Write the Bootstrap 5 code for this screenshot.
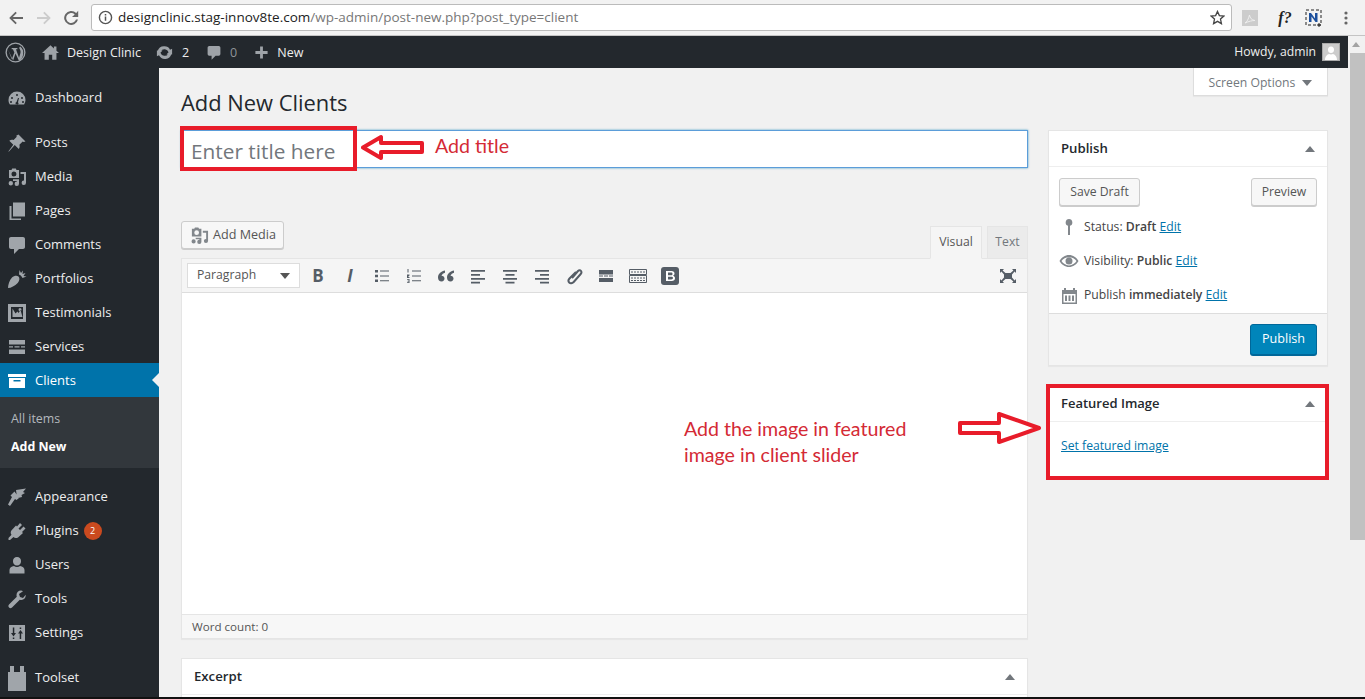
<!DOCTYPE html>
<html lang="en"><head><meta charset="utf-8"><title>Add New Clients</title>
<link href="https://cdn.jsdelivr.net/npm/bootstrap@5.3.0/dist/css/bootstrap.min.css" rel="stylesheet">
<script src="https://cdn.jsdelivr.net/npm/bootstrap@5.3.0/dist/js/bootstrap.bundle.min.js"></script>
<style>
html,body{height:699px;overflow:hidden}
body{font-family:"Open Sans",sans-serif;font-size:12.2px;color:#444;background:#f1f1f1;border-bottom:2px solid #111}
svg{display:block;flex:none}
.sprite{position:absolute;width:0;height:0}
.browser-bar{height:36px;background:#f2f2f2;border-bottom:1px solid #c4c4c4;padding:0 0 0 8px}
.nav-fwd{margin-left:12px}
.nav-reload{margin-left:11px}
.url-box{width:1141px;height:27px;margin-left:12px;background:#fff;border:1px solid #bbb;border-radius:3px;padding:0 6px;font-size:13.5px;color:#777}
.url-box b{font-weight:400;color:#222}
.url-text{margin-left:5px}
.browser-tools{margin-left:10px}
.fq{font:italic 700 16px "Liberation Serif",serif;color:#222;width:24px;text-align:center;margin-left:15px}
.ext-n{margin-left:8px}
.ext-dots{margin-left:21px}
.page-zone{height:661px}
.page-col{min-width:0}
.scroll-gutter{width:17px;background:#f1f1f1;padding-top:17px;position:relative}
.scroll-up{position:absolute;left:4px;top:6px;border:4.500px solid transparent;border-bottom:5px solid #a3a3a3;border-top:0}
.scroll-thumb{height:487px;width:15px;margin-left:2px;background:#c1c1c1}
.admin-bar{height:32px;background:#23282d;color:#eee;padding:1px 8px 0 5px;flex-wrap:nowrap;justify-content:flex-start;font-size:12.5px}
.bar-logo{margin-right:16px;margin-top:-1px}
.bar-item{gap:8px;margin-right:14px;line-height:32px}
.bar-item.bar-upd{gap:8px;margin-right:17px}
.bar-item.bar-com{margin-right:17px}
.bar-item.bar-new{gap:8px}
.bar-dim{color:#8f9498}
.howdy{font-size:12.2px}
.avatar-box{width:18px;height:18px;background:#ccc;margin-left:6px;border:1px solid #aaa}
.main-row{min-height:0}
.side-menu{width:159px;background:#23282d;padding:12px 0;flex-wrap:nowrap;overflow:hidden;flex:none}
.menu-row{height:34px;flex:none;color:#eee;font-size:13px;padding:1px 0 0 7px;gap:8px;position:relative;text-decoration:none}
.menu-row:hover{color:#eee}
.menu-row svg{width:20px;height:20px;fill:#a0a5aa}
.menu-row svg.tall-icon{width:18px;height:26px;margin:0 1px}
.menu-gap{margin-top:11px}
.menu-on{background:#0073aa;color:#fff}
.menu-row.menu-on svg{fill:#fff}
.menu-on::after{content:"";position:absolute;right:0;top:10px;border:7px solid transparent;border-right:7px solid #f1f1f1;border-left:0}
.sub-menu{background:#32373c;height:71px;flex:none;padding:8px 0 0 11px;font-size:12.4px;color:#b4b9be}
.sub-row{height:28px;line-height:28px}
.sub-on{color:#fff;font-weight:700}
.count-pill{background:#ca4a1f;color:#fff;font-size:9px;font-weight:400;width:18px;height:18px;line-height:18px;padding:0;border-radius:50%;margin-left:-3px}
.work-area{padding:0 20px 0 22px;position:relative;min-width:0}
.screen-tab{position:absolute;right:20px;top:0;width:135px;height:28px;background:#fff;border:1px solid #ddd;border-top:0;box-shadow:0 1px 1px rgba(0,0,0,.04);color:#72777c;gap:7px;justify-content:center;padding-top:3px}
.tri-down{border:5px solid transparent;border-top:6px solid #72777c;border-bottom:0}
.tri-up{border:5px solid transparent;border-bottom:6px solid #72777c;border-top:0}
.fmt-select .tri-down{border-top-color:#555}
.page-title{font-size:21.9px;font-weight:400;color:#23282d;margin:0;padding-top:21px;height:62px;line-height:27px}
.edit-col{width:847px;flex:none}
.side-col{width:280px;flex:none;margin-left:20px}
.title-field.form-control{height:38px;border:1px solid #5b9dd9;border-radius:0;box-shadow:0 0 2px rgba(30,140,190,.8);font-size:20.8px;padding:4px 9px 0;color:#72777c;background:#fff}
.title-field.form-control::placeholder{color:#72777c}
.media-row{height:90px;align-items:flex-end}
.wp-btn.btn{height:28px;padding:1px 10px 0;font-size:12.2px;color:#555;background:#f7f7f7;border:1px solid #ccc;border-radius:3px;box-shadow:0 1px 0 #ccc;gap:4px;--bs-btn-hover-bg:#f7f7f7;display:inline-flex;align-items:center}
.wp-btn.media-btn{width:103px;margin-bottom:9px;padding:1px 0 0 8px;font-size:12.6px}
.tab-pair{gap:5px;align-self:flex-end;margin-bottom:-1px;position:relative;z-index:1}
.ed-tab{height:33px;line-height:29px;width:41px;text-align:center;border:1px solid #e5e5e5;background:#ebebeb;color:#72777c}
.ed-tab-on{background:#f5f5f5;color:#555;border-bottom-color:#f5f5f5;width:52px}
.ed-shell{background:#fff;border:1px solid #e5e5e5;box-shadow:0 1px 1px rgba(0,0,0,.04)}
.ed-tools{height:34px;background:#f5f5f5;border-bottom:1px solid #ddd;padding:0 10px 0 5px}
.fmt-select{width:113px;height:25px;background:#fff;border:1px solid #ddd;padding:0 9px;color:#555;margin-right:2px}
.tool-cell{width:32px;color:#555d66;justify-content:center;font-size:17px;line-height:1;font-weight:700}
.tool-cell svg{fill:#555d66}
.tool-i{font-style:italic}
.tool-full{margin-right:-7px}
.ed-body{height:321px}
.ed-foot{height:24px;background:#f7f7f7;border-top:1px solid #e5e5e5;padding:0 10px;font-size:11.6px;color:#555}
.wp-box.card{border:1px solid #e5e5e5;border-radius:0;box-shadow:0 1px 1px rgba(0,0,0,.04);background:#fff;--bs-card-inner-border-radius:0}
.wp-box .card-header{background:#fff;border-bottom:1px solid #eee;border-radius:0;padding:1px 12px 0;height:36px;font-weight:600;font-size:13.2px;color:#23282d}
.wp-box.excerpt-box{margin-top:19px;height:60px}
.pub-btns{padding:11px 10px 4px}
.pub-btns .wp-btn.btn{padding:1px 0 0;justify-content:center;width:81px}
.pub-btns .wp-btn.btn.btn-prev{width:66px}
.pub-row{height:34px;gap:5px;padding:0 10px}
.pub-row svg{fill:#82878c}
.pub-row i{width:20px;display:flex;justify-content:center}
.pub-row b{font-weight:600}
.wp-link{color:#0073aa}
.pub-foot{height:52px;background:#f5f5f5;border-top:1px solid #ddd;padding:0 10px;margin-top:1px}
.blue-btn.btn{height:31px;width:67px;padding:0;background:#0085ba;border:1px solid #006799;border-radius:3px;box-shadow:0 1px 0 #006799;color:#fff;font-size:12.6px}
.wp-box.feat-box{margin-top:19px;height:92px}
.feat-link{padding:15px 12px}
.feat-box .card-header{font-size:13px}
.anno-frame{position:absolute;border:4px solid #e81c2a;pointer-events:none}
.frame-title{left:180px;top:126px;width:177px;height:45px}
.frame-feat{left:1046px;top:384px;width:283px;height:96px}
.anno-text{position:absolute;color:#d42a35;font-family:Lato,sans-serif;font-size:19.6px;line-height:26px;white-space:nowrap}
.text-title{left:435px;top:133px}
.text-feat{left:684px;top:416px}
.anno-art{position:absolute}
.art-left{left:361px;top:134px}
.art-right{left:957px;top:411px}
</style></head><body>
<svg class="sprite"><defs>
<symbol id="i-gauge" viewBox="0 0 20 20"><path d="M10 3.500a8.500 8.500 0 0 0-8.500 8.500c0 1.700.5 3.300 1.400 4.500h14.200a8.300 8.300 0 0 0 1.400-4.500A8.500 8.500 0 0 0 10 3.500zM10 6a1 1 0 1 1 0 2 1 1 0 0 1 0-2zM5 9a1 1 0 1 1 0 2 1 1 0 0 1 0-2zm10 0a1 1 0 1 1 0 2 1 1 0 0 1 0-2zm-3 1-1 4.200a1.500 1.500 0 1 1-1.500-.3L11 10zM4 13a1 1 0 1 1 0 2 1 1 0 0 1 0-2zm12 0a1 1 0 1 1 0 2 1 1 0 0 1 0-2z" fill-rule="evenodd"/></symbol>
<symbol id="i-pin" viewBox="0 0 20 20"><path d="M11.500 1.500l7 7-1.800.6-1-.6-3.300 3.200c.5 1.600.3 3-.6 4.300L7.700 11.900 2 18.500l-.7-.1 5-6.700-4-4c1.300-.9 2.700-1.100 4.300-.6l3.200-3.300-.6-1z"/></symbol>
<symbol id="i-media" viewBox="0 0 20 20"><path fill-rule="evenodd" d="M2 3h2.500l.7-1.500h3.600L9.500 3H12v8H2zM7 4.500a2.500 2.500 0 1 0 0 5 2.500 2.500 0 0 0 0-5z"/><path d="M13.500 5H19v10.800a2.200 2.200 0 1 1-2-2.200V7h-3.500zM6 12.300h6v4.500a2.200 2.200 0 1 1-2-2.200V14H6zM3.800 14a2.200 2.200 0 1 1 0 4.400 2.200 2.200 0 0 1 0-4.400z"/></symbol>
<symbol id="i-pages" viewBox="0 0 20 20"><path d="M6 1.500h12v14H6zM2.500 5H4.500v12.500H14v1.500H2.500z"/></symbol>
<symbol id="i-comment" viewBox="0 0 20 20"><path d="M4 2h12c1.100 0 2 .9 2 2v8c0 1.100-.9 2-2 2h-4l-5 5v-5H4c-1.100 0-2-.9-2-2V4c0-1.100.9-2 2-2z"/></symbol>
<symbol id="i-carrot" viewBox="0 0 20 20"><path d="M1 19c0-3 1.500-8 4-10.500 2-2 5-2.500 6.500-1s1.100 4.400-.8 6.400C8 16.500 4 19 1 19zM12 5.500l.5-4.500 1.500 3 2-2.500-.5 3.500 3-1-2 3 3 .5-4 1.500c-.5-1.500-2-3-3.500-3.500z"/></symbol>
<symbol id="i-image" viewBox="0 0 20 20"><path d="M1 1h18v18H1zm3 3v12h12V4zm1.500 10V5.500l3 5 2-2 1 1.500 2-3 2 7zM13 5a1.500 1.500 0 1 1 0 3 1.500 1.500 0 0 1 0-3z" fill-rule="evenodd"/></symbol>
<symbol id="i-services" viewBox="0 0 20 20"><path d="M2 3h16v4.500H2zM2 9.200h4v1.200H2zm5.500 0h5v1.200h-5zm6.500 0h4v1.200h-4zM2 12.500h16V17H2z"/></symbol>
<symbol id="i-archive" viewBox="0 0 20 20"><path d="M1 3h18v3H1zm1 4h16v10H2zm4.500 2v1.500h7V9z" fill-rule="evenodd"/></symbol>
<symbol id="i-brush" viewBox="0 0 20 20"><path d="M9 3l10-1.500-3 3.500 2 1-3.500 2 .5 2-4 1-1-.5zM7.500 4.500L12 11l-2.500 2-1.500-1-5 7-2-1.500L5 10 3.500 8.500z"/></symbol>
<symbol id="i-plug" viewBox="0 0 20 20"><path d="M13 2l2 2-3.500 3.500 1.500 1.500L16.500 5.500l2 2-3.500 3.500 1 1-5 4.500c-2 .9-3.500.5-4.500-.5L3 19H1.500v-2l3-3.200c-1-1.300-1-2.900-.1-4.300l4.600-5 1 1z"/></symbol>
<symbol id="i-user" viewBox="0 0 20 20"><path d="M10 2a4 4 0 0 1 4 4.500c0 2-1.500 4-4 4s-4-2-4-4A4 4 0 0 1 10 2zM2.500 15c0-2.500 2-3.500 4.500-4 .8.600 1.800 1 3 1s2.200-.4 3-1c2.500.5 4.500 1.500 4.500 4v3.500h-15z"/></symbol>
<symbol id="i-wrench" viewBox="0 0 20 20"><path d="M14 1.500c-2.500 0-4.500 2-4.500 4.500 0 .6.100 1.200.3 1.700L2 15.500a2.100 2.100 0 0 0 3 3l7.800-7.800c.4.200 1 .3 1.600.3 2.500 0 4.600-2.200 4.300-5.200L16 9l-3-1-1-3 4-2.800c-.6-.4-1.300-.7-2-.7z"/></symbol>
<symbol id="i-sliders" viewBox="0 0 20 20"><path d="M2 2h16v16H2zm3.800 2.500V10H4l2.500 3.500L9 10H7.300V4.500zm0 10V16h1.500v-1.500zm6.900-10v1.500h1.500V4.500zM13.500 7 11 10.500h1.700V16h1.500v-5.500H16z" fill-rule="evenodd"/></symbol>
<symbol id="i-toolset" viewBox="0 0 18 26"><path d="M0 7h2V1h4v6h6V1h4v6h2v19H0z"/></symbol>
</defs></svg>

<div class="browser-bar d-flex align-items-center">
  <svg width="16" height="16" viewBox="0 0 16 16"><path d="M15 7H4.800l4-4L7.500 1.700 1.200 8l6.300 6.300 1.300-1.300-4-4H15z" fill="#666"/></svg>
  <svg class="nav-fwd" width="16" height="16" viewBox="0 0 16 16"><path d="M1 7h10.200l-4-4 1.300-1.300L14.800 8l-6.300 6.300L7.200 13l4-4H1z" fill="#ccc"/></svg>
  <svg class="nav-reload" width="16" height="16" viewBox="0 0 16 16"><path d="M13.200 3A7 7 0 1 0 15 9.500h-2A5 5 0 1 1 11.700 4.400L9 7h6.200V.8z" fill="#666"/></svg>
  <div class="url-box d-flex align-items-center">
    <svg width="15" height="15" viewBox="0 0 16 16"><circle cx="8" cy="8" r="6.500" fill="none" stroke="#555" stroke-width="1.500"/><path d="M7.200 7h1.600v4.500H7.200zM7.200 4.200h1.600v1.600H7.200z" fill="#555"/></svg>
    <span class="url-text flex-grow-1"><b>designclinic.stag-innov8te.com</b>/wp-admin/post-new.php?post_type=client</span>
    <svg width="15" height="15" viewBox="0 0 16 16"><path d="M8 1.500l2 4.500 4.800.5-3.600 3.200 1 4.800L8 12.100l-4.200 2.400 1-4.800L1.200 6.500 6 6z" fill="none" stroke="#444" stroke-width="1.400"/></svg>
  </div>
  <div class="browser-tools d-flex align-items-center">
    <svg width="16" height="16" viewBox="0 0 16 16"><rect width="16" height="16" fill="#ccc"/><path d="M3 13c2-1 3.500-4 4.500-8 .5 3 2 5 5.500 5.500-3 0-6 .8-10 2.500z" fill="none" stroke="#eee"/></svg>
    <span class="fq">f?</span>
    <svg class="ext-n" width="18" height="18" viewBox="0 0 18 18"><rect x="1" y="1" width="15" height="15" fill="none" stroke="#222" stroke-dasharray="3 2"/><path d="M4 13V4h2l4 5.500V4h2.500v9h-2L6.500 7.500V13z" fill="#1c4f9c"/><path d="M14 14v4M12 16h4" stroke="#222"/></svg>
    <svg class="ext-dots" width="4" height="16" viewBox="0 0 4 16"><circle cx="2" cy="3" r="1.600" fill="#666"/><circle cx="2" cy="8" r="1.600" fill="#666"/><circle cx="2" cy="13" r="1.600" fill="#666"/></svg>
  </div>
</div>

<div class="page-zone d-flex">
  <div class="page-col flex-grow-1 d-flex flex-column">
    <nav class="navbar admin-bar">
      <svg class="bar-logo" width="21" height="21" viewBox="0 0 22 22"><circle cx="11" cy="11" r="9.800" fill="none" stroke="#9ea3a8" stroke-width="1.400"/><path d="M3.300 8l3.800 10.200L9.800 11l-1.500-3.500H7V6.300h6v1.200h-1.500l3.200 9 1.500-5c.5-1.800-.4-3.200-1-4.300-.5-1-.2-2 .8-2.400a8.500 8.500 0 0 1 3 8.200c-.4 3-2 5.500-4.300 7L11 12l-2.500 7.500" fill="#9ea3a8"/></svg>
      <div class="bar-item d-flex align-items-center"><svg width="17" height="17" viewBox="0 0 20 20"><path d="M10 1.500L0 10.500h3v8h5v-6h4v6h5v-8h3l-3-2.700V3h-3v2.200z" fill="#9ea3a8"/></svg><span>Design Clinic</span></div>
      <div class="bar-item bar-upd d-flex align-items-center"><svg width="19" height="19" viewBox="0 0 20 20"><path d="M10 3.500a6.500 6.500 0 0 1 5.800 3.500L18 6v6h-6l2.300-2.300A4.700 4.700 0 0 0 6 8.500H2.800A7 7 0 0 1 10 3.500zM2 14V8h6L5.700 10.300A4.700 4.700 0 0 0 14 11.500h3.200A7 7 0 0 1 4.200 13z" fill="#9ea3a8"/></svg><span>2</span></div>
      <div class="bar-item bar-com d-flex align-items-center"><svg width="16" height="17" viewBox="0 0 20 20"><use href="#i-comment" fill="#9ea3a8"/></svg><span class="bar-dim">0</span></div>
      <div class="bar-item bar-new d-flex align-items-center"><svg width="15" height="15" viewBox="0 0 16 16"><path d="M6.500 1.500h3v5h5v3h-5v5h-3v-5h-5v-3h5z" fill="#9ea3a8"/></svg><span>New</span></div>
      <div class="howdy ms-auto d-flex align-items-center">Howdy, admin<span class="avatar-box d-block"><svg width="16" height="16" viewBox="0 0 16 16"><path d="M8 2.500a3 3 0 0 1 3 3.500c0 2-1.300 3-3 3S5 8 5 6a3 3 0 0 1 3-3.500zM2 16c0-4 2.500-5.500 4-6 1.200.6 2.800.6 4 0 1.500.5 4 2 4 6z" fill="#fff"/></svg></span></div>
    </nav>
    <div class="main-row d-flex flex-grow-1">
      <aside class="side-menu nav flex-column">
        <a class="menu-row d-flex align-items-center" href="#"><svg><use href="#i-gauge"/></svg>Dashboard</a>
        <a class="menu-row menu-gap d-flex align-items-center" href="#"><svg><use href="#i-pin"/></svg>Posts</a>
        <a class="menu-row d-flex align-items-center" href="#"><svg><use href="#i-media"/></svg>Media</a>
        <a class="menu-row d-flex align-items-center" href="#"><svg><use href="#i-pages"/></svg>Pages</a>
        <a class="menu-row d-flex align-items-center" href="#"><svg><use href="#i-comment"/></svg>Comments</a>
        <a class="menu-row d-flex align-items-center" href="#"><svg><use href="#i-carrot"/></svg>Portfolios</a>
        <a class="menu-row d-flex align-items-center" href="#"><svg><use href="#i-image"/></svg>Testimonials</a>
        <a class="menu-row d-flex align-items-center" href="#"><svg><use href="#i-services"/></svg>Services</a>
        <a class="menu-row menu-on d-flex align-items-center" href="#"><svg><use href="#i-archive"/></svg>Clients</a>
        <div class="sub-menu"><div class="sub-row">All items</div><div class="sub-row sub-on">Add New</div></div>
        <a class="menu-row menu-gap d-flex align-items-center" href="#"><svg><use href="#i-brush"/></svg>Appearance</a>
        <a class="menu-row d-flex align-items-center" href="#"><svg><use href="#i-plug"/></svg>Plugins<span class="badge count-pill">2</span></a>
        <a class="menu-row d-flex align-items-center" href="#"><svg><use href="#i-user"/></svg>Users</a>
        <a class="menu-row d-flex align-items-center" href="#"><svg><use href="#i-wrench"/></svg>Tools</a>
        <a class="menu-row d-flex align-items-center" href="#"><svg><use href="#i-sliders"/></svg>Settings</a>
        <a class="menu-row menu-gap d-flex align-items-center" href="#"><svg class="tall-icon"><use href="#i-toolset"/></svg>Toolset</a>
      </aside>
      <main class="work-area flex-grow-1">
        <div class="screen-tab d-flex align-items-center">Screen Options<span class="tri-down"></span></div>
        <h1 class="page-title">Add New Clients</h1>
        <div class="d-flex">
          <div class="edit-col">
            <input class="form-control title-field" placeholder="Enter title here" aria-label="Title">
            <div class="media-row d-flex justify-content-between">
              <button class="btn wp-btn media-btn" type="button"><svg width="19" height="19" viewBox="0 0 20 20"><use href="#i-media" fill="#82878c"/></svg>Add Media</button>
              <div class="tab-pair d-flex"><div class="ed-tab ed-tab-on">Visual</div><div class="ed-tab">Text</div></div>
            </div>
            <div class="ed-shell">
              <div class="ed-tools d-flex align-items-center">
                <div class="fmt-select d-flex align-items-center justify-content-between">Paragraph<span class="tri-down"></span></div>
                <div class="tool-cell d-flex">B</div>
                <div class="tool-cell tool-i d-flex">I</div>
                <div class="tool-cell d-flex"><svg width="16" height="16" viewBox="0 0 16 16"><path d="M1 2h3v2.500H1zM1 6.800h3v2.500H1zM1 11.500h3V14H1zM6 2.500h9v1H6zM6 7.500h9v1H6zM6 12.200h9v1H6z"/></svg></div>
                <div class="tool-cell d-flex"><svg width="16" height="16" viewBox="0 0 16 16"><path d="M1.500 1h1v3.500h-1zM1 6.500h2.500v1L2 9h1.500v1H1zM1 11h2.500v4H1v-.8h1.600V13.500H1.500v-.8h1.100v-1H1zM6 2.500h9v1H6zM6 7.500h9v1H6zM6 12.200h9v1H6z"/></svg></div>
                <div class="tool-cell d-flex"><svg width="18" height="16" viewBox="0 0 18 16"><path d="M8 2.500C4.500 3.200 1 5.500 1 9.500 1 12 2.500 13.500 4.500 13.500s3-1.500 3-3-1.200-2.800-3-2.800c.6-1.600 1.900-2.500 3.500-3zM17 2.500c-3.500.7-7 3-7 7 0 2.500 1.500 4 3.500 4s3-1.500 3-3-1.200-2.800-3-2.800c.6-1.600 1.900-2.500 3.500-3z"/></svg></div>
                <div class="tool-cell d-flex"><svg width="16" height="16" viewBox="0 0 16 16"><path d="M1 2h14v1.800H1zM1 6h9v1.800H1zM1 10h14v1.800H1zM1 13.800h9v1.700H1z"/></svg></div>
                <div class="tool-cell d-flex"><svg width="16" height="16" viewBox="0 0 16 16"><path d="M1 2h14v1.800H1zM3.500 6h9v1.800h-9zM1 10h14v1.800H1zM3.500 13.800h9v1.700h-9z"/></svg></div>
                <div class="tool-cell d-flex"><svg width="16" height="16" viewBox="0 0 16 16"><path d="M1 2h14v1.800H1zM6 6h9v1.800H6zM1 10h14v1.800H1zM6 13.800h9v1.700H6z"/></svg></div>
                <div class="tool-cell d-flex"><svg width="18" height="18" viewBox="0 0 18 18"><path d="M7 11l6-7c1-1 2.300-1 3 0s.6 2-.3 3l-7 8c-1.500 1.500-3.500 1.500-4.500.5s-1-2.500.3-4L11 5" fill="none" stroke="#555d66" stroke-width="2"/></svg></div>
                <div class="tool-cell d-flex"><svg width="16" height="16" viewBox="0 0 16 16"><path d="M1 2h14v4.500H1zM1 7.500h4v1H1zM6 7.500h4v1H6zM11 7.500h4v1h-4zM1 10h14v4H1z"/></svg></div>
                <div class="tool-cell d-flex"><svg width="18" height="16" viewBox="0 0 18 16"><path fill="none" stroke="#555d66" d="M.5 1.500h17v5h-17zM.5 7.500h17v7h-17z"/><path stroke="#555d66" stroke-dasharray="2 1" d="M2 4h14M2 10h14M2 12.500h14"/></svg></div>
                <div class="tool-cell d-flex"><svg width="18" height="18" viewBox="0 0 18 18"><rect width="18" height="18" rx="3"/><path d="M5 4h5.500c2 0 3 1 3 2.500 0 1-.5 1.800-1.500 2.200 1.200.3 2 1.200 2 2.500 0 1.800-1.300 2.800-3.300 2.800H5zm2 1.600v2.600h3c1 0 1.500-.5 1.500-1.300S11 5.600 10 5.600zm0 4.200v2.600h3.300c1 0 1.700-.5 1.700-1.300s-.7-1.300-1.700-1.300z" fill="#fff" fill-rule="evenodd"/></svg></div>
                <div class="tool-cell tool-full d-flex ms-auto"><svg width="18" height="16" viewBox="0 0 18 16"><path d="M1 1h4L3.600 2.500 6.500 5h5l2.900-2.500L13 1h4v4l-1.400-1.400L13 6.500v3l2.600 2.900L17 11v4h-4l1.400-1.400L11.500 11h-5l-2.900 2.600L5 15H1v-4l1.400 1.400L5 9.500v-3L2.400 3.600 1 5z"/></svg></div>
              </div>
              <div class="ed-body"></div>
              <div class="ed-foot d-flex align-items-center">Word count: 0</div>
            </div>
            <div class="card wp-box excerpt-box">
              <div class="card-header d-flex align-items-center justify-content-between">Excerpt<span class="tri-up"></span></div>
            </div>
          </div>
          <div class="side-col">
            <div class="card wp-box">
              <div class="card-header d-flex align-items-center justify-content-between">Publish<span class="tri-up"></span></div>
              <div class="pub-btns d-flex justify-content-between">
                <button class="btn wp-btn" type="button">Save Draft</button>
                <button class="btn wp-btn btn-prev" type="button">Preview</button>
              </div>
              <div class="pub-row d-flex align-items-center"><i><svg width="16" height="18" viewBox="0 0 16 18"><path d="M8 1a3.500 3.500 0 0 1 1 6.800V17H7V7.800A3.500 3.500 0 0 1 8 1z"/></svg></i><span>Status: <b>Draft</b> <a href="#" class="wp-link">Edit</a></span></div>
              <div class="pub-row d-flex align-items-center"><i><svg width="20" height="14" viewBox="0 0 20 14"><path d="M10 1c4 0 7.500 2.500 9.500 6-2 3.500-5.500 6-9.500 6S2.500 10.500.5 7C2.500 3.500 6 1 10 1zm0 2.200C6.800 3.200 4 4.800 2.500 7 4 9.200 6.800 11.500 10 11.500s6-2.300 7.500-4.500C16 4.800 13.200 3.200 10 3.200zM10 3.500a3.500 3.500 0 1 1 0 7 3.500 3.500 0 0 1 0-7z" fill-rule="evenodd"/></svg></i><span>Visibility: <b>Public</b> <a href="#" class="wp-link">Edit</a></span></div>
              <div class="pub-row d-flex align-items-center"><i><svg width="17" height="17" viewBox="0 0 17 17"><path d="M1 3h2V1h2v2h7V1h2v2h2v14H1zm1.500 4v8.500h12V7zM4 8.500h2V14H4zm3.500 0h2V14h-2zm3.500 0h2V14h-2z" fill-rule="evenodd"/></svg></i><span>Publish <b>immediately</b> <a href="#" class="wp-link">Edit</a></span></div>
              <div class="pub-foot d-flex align-items-center justify-content-end"><button class="btn blue-btn" type="button">Publish</button></div>
            </div>
            <div class="card wp-box feat-box">
              <div class="card-header d-flex align-items-center justify-content-between">Featured Image<span class="tri-up"></span></div>
              <div class="feat-link"><a href="#" class="wp-link">Set featured image</a></div>
            </div>
          </div>
        </div>
      </main>
    </div>
  </div>
  <div class="scroll-gutter"><span class="scroll-up d-block"></span><div class="scroll-thumb"></div></div>
</div>

<div class="anno-frame frame-title"></div>
<svg class="anno-art art-left" width="64" height="27" viewBox="0 0 64 27"><path d="M2 13.500 20 3v6h41v9H20v6z" fill="#fff" stroke="#e81c2a" stroke-width="4" stroke-linejoin="round"/></svg>
<div class="anno-text text-title">Add title</div>
<div class="anno-text text-feat">Add the image in featured<br>image in client slider</div>
<svg class="anno-art art-right" width="85" height="34" viewBox="0 0 85 34"><path d="M82 17 42 3v9H3v10h39v9z" fill="#fff" stroke="#e81c2a" stroke-width="4" stroke-linejoin="round"/></svg>
<div class="anno-frame frame-feat"></div>
</body></html>
